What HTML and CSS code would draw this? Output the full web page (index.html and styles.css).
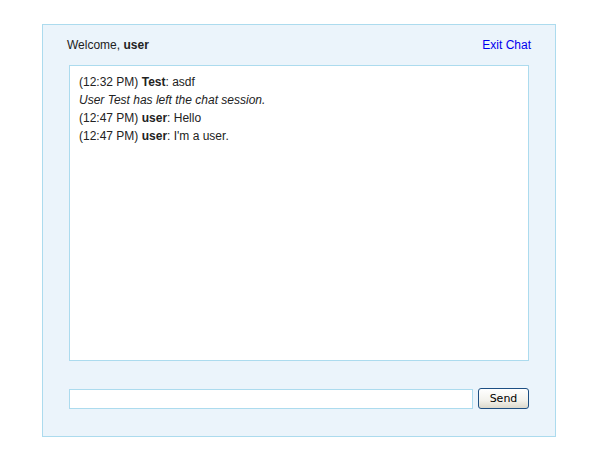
FILE: index.html
```html
<!DOCTYPE html>
<html>
<head>
<meta charset="utf-8">
<link rel="stylesheet" href="styles.css">
</head>
<body>
<div class="wrapper">
  <div class="menu">
    <p class="welcome">Welcome, <b>user</b></p>
    <a class="logout" href="#">Exit Chat</a>
  </div>
  <div class="chatbox">
    <div class="msg">(12:32 PM) <b>Test</b>: asdf</div>
    <div class="msg"><i>User Test has left the chat session.</i></div>
    <div class="msg">(12:47 PM) <b>user</b>: Hello</div>
    <div class="msg">(12:47 PM) <b>user</b>: I'm a user.</div>
  </div>
  <form class="send-form">
    <input class="usermsg" type="text">
    <button class="submit" type="button">Send</button>
  </form>
</div>
</body>
</html>
```
FILE: styles.css
```css
html, body {
  margin: 0;
  padding: 0;
  background: #ffffff;
}
body {
  font-family: "Liberation Sans", Arial, sans-serif;
  font-size: 12px;
  color: #222222;
}
.wrapper {
  margin: 24px 0 0 42px;
  width: 460px;
  padding: 11px 26px 27px 26px;
  background: #ebf4fb;
  border: 1px solid #acdbee;
  display: flex;
  flex-direction: column;
}
.menu {
  display: flex;
  justify-content: space-between;
  align-items: center;
  line-height: 18px;
  padding: 0;
  margin-left: -2px;
}
.welcome {
  margin: 0;
}
.logout {
  color: #0000ee;
  text-decoration: none;
  margin-right: -2px;
}
.chatbox {
  margin-top: 11px;
  height: 279px;
  padding: 7px 9px 8px 9px;
  background: #ffffff;
  border: 1px solid #acdbee;
  line-height: 18px;
}
.send-form {
  margin: 27px 0 0 0;
  display: flex;
  align-items: center;
  gap: 5px;
}
.usermsg {
  box-sizing: border-box;
  width: 404px;
  height: 20px;
  margin: 1px 0 0 0;
  border: 1px solid #acdbee;
  background: #ffffff;
  padding: 0 3px;
  outline: none;
}
.submit {
  box-sizing: border-box;
  width: 51px;
  height: 21px;
  padding: 0;
  border: 1px solid #1d4f83;
  border-radius: 3px;
  background: linear-gradient(#ffffff, #f3f2ec 60%, #dcd9cc);
  font-family: "DejaVu Sans", Tahoma, sans-serif;
  font-size: 11px;
  color: #000000;
}
```
